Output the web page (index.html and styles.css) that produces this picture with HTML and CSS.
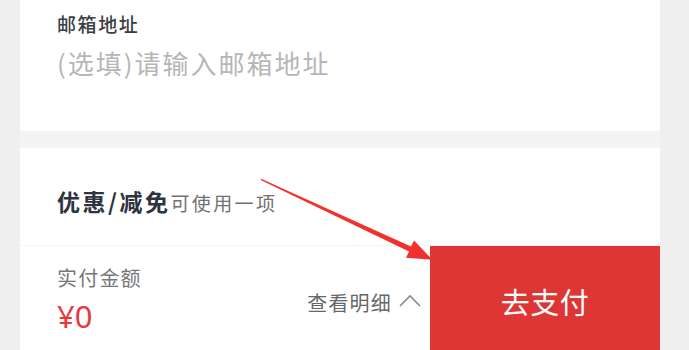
FILE: index.html
```html
<!DOCTYPE html>
<html lang="zh">
<head>
<meta charset="utf-8">
<link rel="stylesheet" href="styles.css">
</head>
<body>
<div class="page">
  <section class="card email">
    <div class="label">邮箱地址</div>
    <div class="placeholder">(选填)请输入邮箱地址</div>
  </section>
  <div class="band"></div>
  <section class="card discount">
    <span class="title">优惠/减免</span><span class="sub">可使用一项</span>
  </section>
  <footer class="paybar">
    <div class="amount">
      <div class="amount-label">实付金额</div>
      <div class="amount-value">¥0</div>
    </div>
    <div class="detail">
      <span>查看明细</span>
      <svg class="chev" width="22" height="14" viewBox="0 0 22 14"><polyline points="1,12 11,2 21,12" fill="none" stroke="#8a8a8a" stroke-width="1.6"/></svg>
    </div>
    <div class="paybtn">去支付</div>
  </footer>
</div>
<svg class="arrow" width="689" height="350" viewBox="0 0 689 350">
  <polygon points="260.5,178.6 411,246.4 414,240.6 432.5,259.8 406,257.8 409,251.6 261.2,180.2" fill="#f2302e"/>
</svg>
</body>
</html>
```
FILE: styles.css
```css
* { box-sizing: border-box; }
html, body { margin: 0; padding: 0; }
body {
  width: 689px;
  height: 350px;
  overflow: hidden;
  background: #efefef;
  font-family: "Noto Sans CJK SC", "Noto Sans", sans-serif;
  position: relative;
}
.page {
  margin-left: 20px;
  width: 640px;
  display: flex;
  flex-direction: column;
}
.card { background: #ffffff; }
.email {
  height: 131px;
  padding: 12px 0 0 37px;
}
.label {
  font-size: 19px;
  line-height: 24px;
  letter-spacing: 1.6px;
  font-weight: 500;
  color: #3b3e46;
}
.placeholder {
  margin-top: 11px;
  font-size: 26px;
  line-height: 32px;
  letter-spacing: 2px;
  color: #b6b6b6;
}
.band {
  height: 17px;
  background: #f3f4f5;
}
.discount {
  height: 98px;
  padding: 38px 0 0 37px;
  line-height: 30px;
}
.title {
  font-size: 23px;
  font-weight: 700;
  letter-spacing: 2.5px;
  color: #2d3340;
}
.sub {
  font-size: 19px;
  letter-spacing: 2.4px;
  color: #717171;
}
.paybar {
  height: 104px;
  background: #ffffff;
  display: flex;
  box-shadow: 0 -1px 1px rgba(0, 0, 0, 0.04);
}
.amount {
  flex: 1;
  padding: 19px 0 0 37px;
}
.amount-label {
  font-size: 20px;
  line-height: 26px;
  letter-spacing: 1.2px;
  color: #777777;
}
.amount-value {
  margin-top: 7px;
  font-family: "Noto Sans", sans-serif;
  font-size: 31px;
  line-height: 36px;
  color: #e8383a;
}
.detail {
  display: flex;
  align-items: center;
  gap: 7px;
  padding: 8px 9px 0 0;
  font-size: 20px;
  letter-spacing: 1.2px;
  color: #676767;
}
.chev { display: block; margin-top: -3px; }
.paybtn {
  width: 230px;
  background: #de3535;
  color: #ffffff;
  display: flex;
  align-items: center;
  justify-content: center;
  padding-top: 6px;
  font-size: 29px;
  letter-spacing: 0.5px;
}
.arrow {
  position: absolute;
  left: 0;
  top: 0;
  pointer-events: none;
}
```
